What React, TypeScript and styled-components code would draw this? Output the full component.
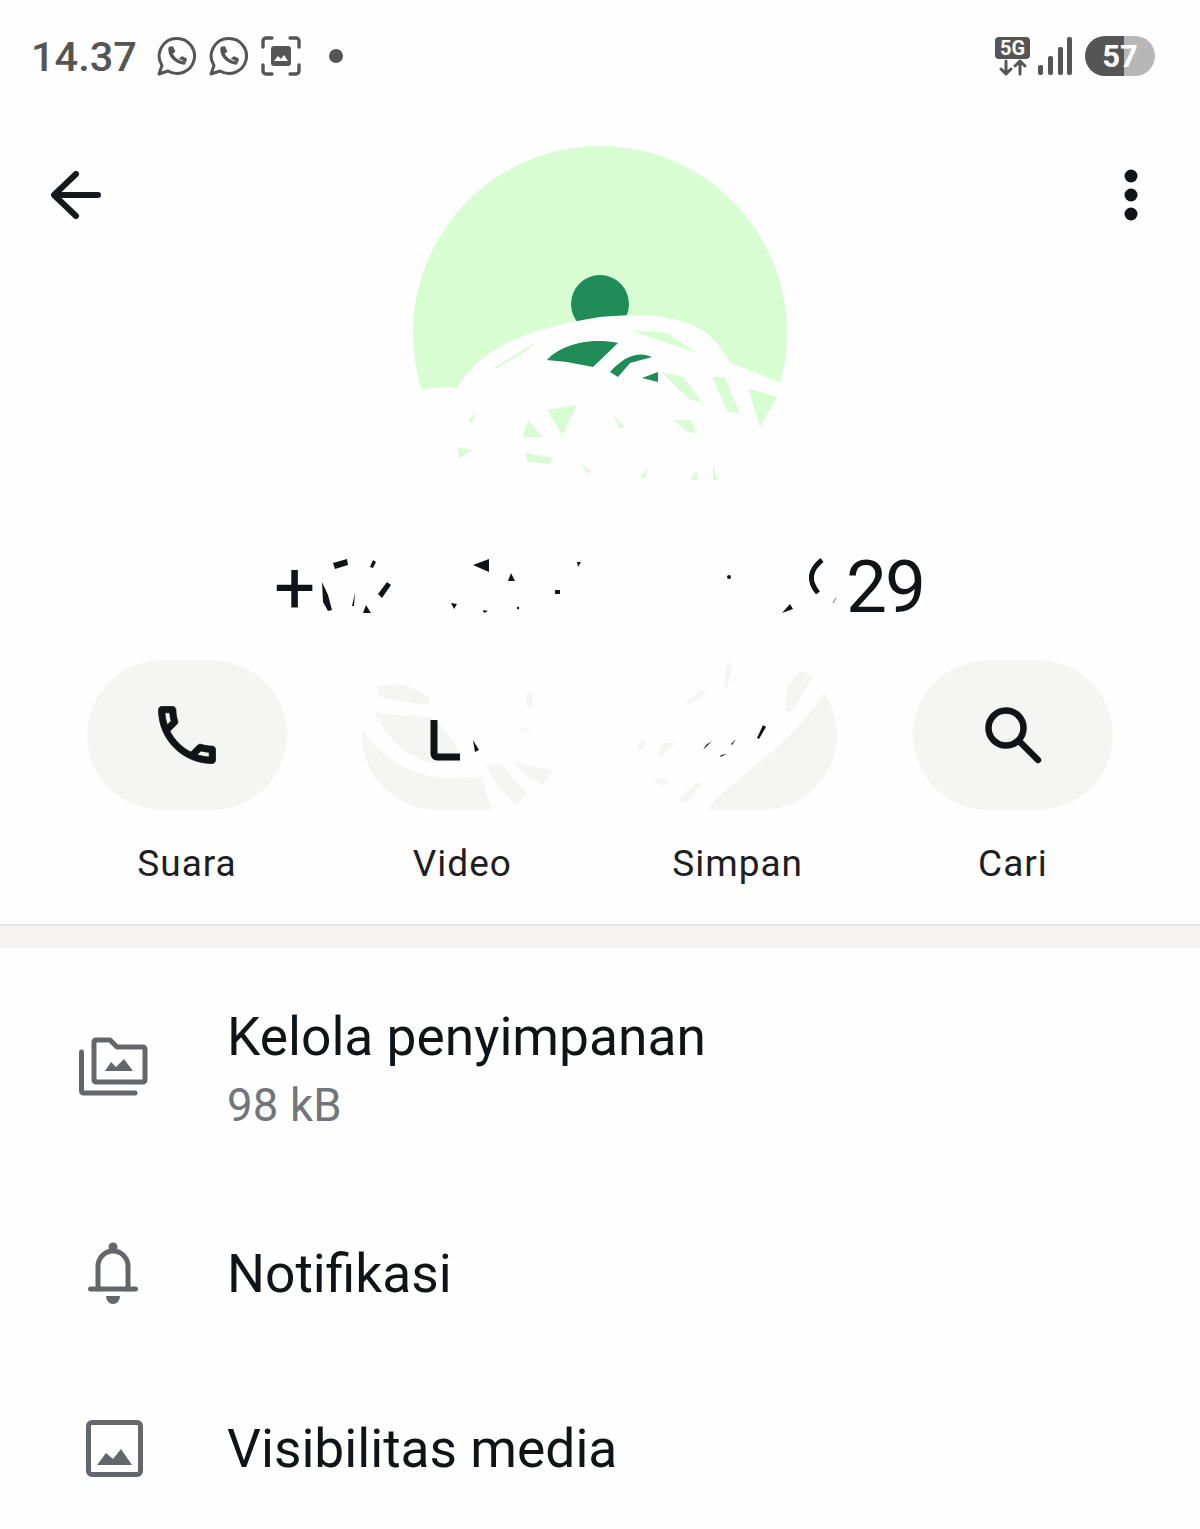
import React from "react";
import styled, { createGlobalStyle } from "styled-components";

const Global = createGlobalStyle`
  html, body { margin: 0; padding: 0; background: #fefefe; }
  body { font-family: Roboto, "Liberation Sans", sans-serif; overflow: hidden; }
`;

const Page = styled.div`
  width: 1200px;
  height: 1529px;
  overflow: hidden;
  background: #fefefe;
  color: #101417;
`;

const StatusBar = styled.div`
  height: 112px;
  padding: 0 45px 0 31px;
  box-sizing: border-box;
  display: flex;
  align-items: center;
  justify-content: space-between;
  color: #555;
`;

const StatusGroup = styled.div`
  display: flex;
  align-items: center;
`;

const Time = styled.span`
  font-size: 41.5px;
  font-weight: 500;
  margin-right: 20px;
`;

const StatusIcon = styled.svg<{ $gap?: number }>`
  display: block;
  margin-right: ${(p) => p.$gap ?? 0}px;
  flex: none;
`;

const Notice = styled.span`
  width: 14px;
  height: 14px;
  border-radius: 50%;
  background: #555;
  margin-left: 28px;
`;

const NetBlock = styled.div`
  display: flex;
  flex-direction: column;
  align-items: center;
  width: 35px;
  margin-right: 8px;
`;

const FiveG = styled.span`
  width: 35px;
  height: 22px;
  border-radius: 4px;
  background: #555;
  color: #fefefe;
  font-size: 20px;
  line-height: 22px;
  font-weight: 700;
  text-align: center;
`;

const Battery = styled.div`
  position: relative;
  width: 70px;
  height: 40px;
  margin-left: 13px;
  border-radius: 20px;
  overflow: hidden;
  background: linear-gradient(90deg, #555 0, #555 39px, #b7b7b7 39px);
  color: #fefefe;
  font-size: 31px;
  line-height: 41px;
  font-weight: 700;
  text-align: center;
`;

const Header = styled.div`
  display: grid;
  grid-template-columns: 1fr 374px 1fr;
  align-items: start;
  height: 408px;
  padding-top: 34px;
  box-sizing: border-box;
`;

const BackIcon = styled.svg`
  display: block;
  margin: 25px 0 0 51px;
`;

const MoreIcon = styled.svg`
  display: block;
  margin: 23px 62px 0 auto;
`;

const Avatar = styled.svg`
  display: block;
  filter: blur(0.5px);
`;

const NameRow = styled.div`
  height: 140px;
  padding: 0 276px 0 274px;
  box-sizing: border-box;
  display: flex;
  align-items: flex-start;
  justify-content: space-between;
  font-size: 73px;
  line-height: 70px;
  letter-spacing: -2px;
  font-weight: 400;
`;

const NameEdge = styled.span`
  display: block;
  margin-top: 32px;
`;

const NameScratch = styled.svg`
  display: block;
  flex: none;
  margin-top: 35px;
`;

const Actions = styled.div`
  display: flex;
  justify-content: space-between;
  padding: 0 87px;
  height: 264px;
`;

const Action = styled.div`
  width: 200px;
  display: flex;
  flex-direction: column;
  align-items: center;
`;

const Pill = styled.div<{ $scratched?: boolean }>`
  width: 200px;
  height: 150px;
  border-radius: 75px;
  background: ${(p) => (p.$scratched ? "transparent" : "#f5f5f3")};
  display: flex;
  align-items: center;
  justify-content: center;
`;

const PillArt = styled.svg`
  display: block;
  overflow: visible;
  filter: blur(0.5px);
`;

const ActionLabel = styled.span`
  margin-top: 32px;
  font-size: 37px;
  line-height: 44px;
  letter-spacing: 1px;
  color: #1d2023;
`;

const Band = styled.div`
  height: 24px;
  background: #f5f4f2;
  border-top: 2px solid #e4e4e3;
  box-sizing: border-box;
`;

const Row = styled.div<{ $height: number }>`
  height: ${(p) => p.$height}px;
  display: grid;
  grid-template-columns: 227px 1fr;
  align-items: center;
`;

const RowIcon = styled.div<{ $nudge?: number }>`
  display: flex;
  justify-content: center;
  padding-left: ${(p) => p.$nudge ?? 0}px;
  box-sizing: border-box;
  width: 226px;
`;

const RowText = styled.div<{ $drop?: number }>`
  display: flex;
  flex-direction: column;
  padding-top: ${(p) => p.$drop ?? 0}px;
`;

const RowTitle = styled.span`
  font-size: 53.3px;
  line-height: 62px;
  color: #101417;
`;

const RowSub = styled.span`
  font-size: 45.5px;
  line-height: 54px;
  margin-top: 11px;
  letter-spacing: 0.2px;
  color: #70767b;
`;

const WhatsApp = () => (
  <StatusIcon width="40" height="40" viewBox="0 0 40 40" $gap={12} fill="none" stroke="#555" strokeWidth="3">
    <path d="M20 2.5A17.5 17.5 0 1 1 11 35L2 38l3-8.5A17.5 17.5 0 0 1 20 2.5Z" strokeLinejoin="round" />
    <path d="M13 12.5c-.5 7 6 14 14 14.500" strokeWidth="3.400" strokeLinecap="round" />
    <path d="M12.500 11.500l3-.5 2 4.500-2.500 2M22.500 23l2.500-2 4 2-.5 3" fill="#555" strokeWidth="1.600" strokeLinejoin="round" />
  </StatusIcon>
);

const ScreenshotIcon = () => (
  <StatusIcon width="40" height="40" viewBox="0 0 40 40" fill="none">
    <path d="M2 11V5a3 3 0 0 1 3-3h6M29 2h6a3 3 0 0 1 3 3v6M38 29v6a3 3 0 0 1-3 3h-6M11 38H5a3 3 0 0 1-3-3v-6" stroke="#555" strokeWidth="3.400" strokeLinecap="round" />
    <rect x="10" y="10" width="20" height="20" rx="3" fill="#555" />
    <path d="M13 25l4-5 3 3 3-4 4 6z" fill="#fefefe" />
  </StatusIcon>
);

const ScratchBits = ({ d, fill }: { d: string[]; fill: string }) => (
  <>
    {d.map((points) => (
      <polygon key={points} points={points} fill={fill} />
    ))}
  </>
);

const lightBits = [
  "493,368 540,340 523,353 497,368",
  "630,330 667,333 697,353 667,343",
  "661,372 683,377 702,402 690,400",
  "712,377 725,377 740,413 728,412",
  "748,388 777,397 760,427",
  "547,410 577,405 562,435",
  "528,420 543,437 522,437",
  "457,447 473,450 459,458",
  "525,453 553,458 550,464 528,462",
  "673,420 690,420 697,433 687,432",
  "613,415 625,427 620,429",
  "468,420 477,413 472,423",
  "580,463 592,472 587,473",
  "640,477 648,468 645,478",
  "690,480 697,470 697,480",
  "713,463 718,480 713,480",
];

const AvatarArt = () => (
  <Avatar width="374" height="374" viewBox="413 146 374 374">
    <circle cx="600" cy="333" r="187" fill="#d9fdd3" />
    <circle cx="600" cy="304" r="29" fill="#1f8b57" />
    <path d="M405 395C425 388 440 386 457 388C480 350 520 330 600 317C680 310 710 325 730 363L790 386V525H405Z" fill="#fefefe" />
    <ScratchBits d={lightBits} fill="#d9fdd3" />
    <path d="M547 360C560 345 590 337 618 343L593 367L567 362Z" fill="#1f8b57" />
    <path d="M610 372C622 358 638 350 652 357L630 363L618 377Z" fill="#1f8b57" />
    <polygon points="642,378 658,372 658,382" fill="#1f8b57" />
  </Avatar>
);

const numberBits = [
  "322,582 328,595 332,610 328,611 323,602",
  "333,563 347,559 348,565 335,569",
  "373,560 376,562 373,568 370,567",
  "387,582 391,585 382,598 378,594",
  "355,593 352,606 354,606",
  "366,605 371,613 363,613",
  "473,565 489,559 489,572",
  "511,573 515,581 508,581",
  "451,603 457,604 454,609",
  "483,610 488,611 484,613",
  "577,562 581,562 578,567",
  "555,590 560,590 560,594 555,594",
  "782,613 790,604 793,609",
];

const NumberScratch = () => (
  <NameScratch width="520" height="65" viewBox="320 555 520 65">
    <ScratchBits d={numberBits} fill="#101417" />
    <circle cx="729" cy="577" r="2" fill="#101417" />
    <circle cx="518" cy="608" r="1.200" fill="#101417" />
    <path d="M822 560q-19 15-4 33" fill="none" stroke="#101417" strokeWidth="5" />
    <path d="M833 603l3-5" stroke="#888" strokeWidth="1.200" />
  </NameScratch>
);

const greyVideo = [
  "M15 27C30 20 55 25 68 40L65 45C45 42 28 40 18 37Z",
  "M13 53L68 57C85 70 92 80 101 100L71 103C48 98 28 85 13 53Z",
  "M1 70C15 95 50 118 88 118L120 117L125 137L131 150H75A75 75 0 0 1 0 75Z",
  "M123 105L138 103L165 133L155 146L138 130Z",
  "M151 102L191 110L181 125L165 117Z",
  "M165 33L171 33L171 47L164 47Z",
  "M156 67L171 70L161 73Z",
];

const greySave = [
  "M186 33A75 75 0 0 1 125 150H69C90 120 145 95 186 33Z",
  "M162 10L175 17L155 50L147 53L149 27Z",
  "M89 3L95 3L90 27L85 30Z",
  "M62 30L69 32L52 45L48 42Z",
  "M25 83L37 83L24 97L19 96Z",
  "M-1 83L7 80L5 90L0 90Z",
  "M14 118L32 120L24 127Z",
  "M59 122L65 123L49 143L39 140Z",
];

const inkSave = [
  "125,65 128,67 121,79 119,78",
  "74,81 65,90 68,85",
  "98,79 94,85 93,84",
  "89,94 82,97 83,95",
];

const GreyShapes = ({ d }: { d: string[] }) => (
  <>
    {d.map((path) => (
      <path key={path} d={path} fill="#f5f5f3" />
    ))}
  </>
);

const Row1Icon = () => (
  <svg width="70" height="60" viewBox="0 0 70 60" fill="none" stroke="#63676b" strokeWidth="5" strokeLinecap="round" strokeLinejoin="round">
    <path d="M3.500 15V54a2 2 0 0 0 2 2H57" />
    <path d="M16 5a2 2 0 0 1 2-2h14l7 7h26a2 2 0 0 1 2 2v31a2 2 0 0 1-2 2H18a2 2 0 0 1-2-2Z" />
    <path d="M27 34l6-9 5 5 8-8 9 12Z" fill="#63676b" stroke="none" />
  </svg>
);

const Row2Icon = () => (
  <svg width="50" height="63" viewBox="0 0 50 63" fill="none" stroke="#63676b" strokeWidth="5" strokeLinecap="round">
    <path d="M10 47V24A15 15 0 0 1 40 24V47" />
    <path d="M2.500 47H47.500" />
    <circle cx="25" cy="5" r="4.500" fill="#63676b" stroke="none" />
    <path d="M18 54H32A7 8 0 0 1 18 54Z" fill="#63676b" stroke="none" />
  </svg>
);

const Row3Icon = () => (
  <svg width="57" height="57" viewBox="0 0 57 57" fill="none" stroke="#63676b" strokeWidth="5">
    <rect x="2.500" y="2.500" width="52" height="52" rx="3.500" />
    <path d="M11 45l9-12 7 6 8-10 11 16Z" fill="#63676b" stroke="none" />
  </svg>
);

export default function App() {
  return (
    <Page>
      <Global />
      <StatusBar>
        <StatusGroup>
          <Time>14.37</Time>
          <WhatsApp />
          <WhatsApp />
          <ScreenshotIcon />
          <Notice />
        </StatusGroup>
        <StatusGroup>
          <NetBlock>
            <FiveG>5G</FiveG>
            <StatusIcon width="28" height="17" viewBox="0 0 28 17" fill="none" stroke="#555" strokeWidth="3" strokeLinecap="round" strokeLinejoin="round">
              <path d="M7 2V15M2 10l5 5 5-5M21 15V2M16 7l5-5 5 5" />
            </StatusIcon>
          </NetBlock>
          <StatusIcon width="34" height="38" viewBox="0 0 34 38" fill="#555">
            <rect x="0" y="28" width="5" height="10" rx="2" />
            <rect x="10" y="19" width="5" height="19" rx="2" />
            <rect x="20" y="10" width="5" height="28" rx="2" />
            <rect x="29" y="0" width="5" height="38" rx="2" />
          </StatusIcon>
          <Battery>57</Battery>
        </StatusGroup>
      </StatusBar>

      <Header>
        <BackIcon width="50" height="48" viewBox="0 0 50 48" fill="none" stroke="#15191c" strokeWidth="6" strokeLinecap="round" strokeLinejoin="round">
          <path d="M47 24H4M25 3L3 24l22 21" />
        </BackIcon>
        <AvatarArt />
        <MoreIcon width="14" height="52" viewBox="0 0 14 52" fill="#101417">
          <circle cx="7" cy="7" r="6.500" />
          <circle cx="7" cy="26" r="6.500" />
          <circle cx="7" cy="45" r="6.500" />
        </MoreIcon>
      </Header>

      <NameRow>
        <NameEdge>+</NameEdge>
        <NumberScratch />
        <NameEdge>29</NameEdge>
      </NameRow>

      <Actions>
        <Action>
          <Pill>
            <svg width="76" height="76" viewBox="0 0 24 24" fill="#101417" stroke="#101417" strokeWidth="0.250">
              <path d="M6.540 5c.06.89.21 1.760.45 2.590l-1.200 1.200c-.41-1.200-.67-2.470-.76-3.790h1.510m9.860 12.020c.85.24 1.720.39 2.600.45v1.490c-1.320-.09-2.590-.35-3.800-.75l1.200-1.190M7.500 3H4c-.55 0-1 .45-1 1 0 9.390 7.610 17 17 17 .55 0 1-.45 1-1v-3.490c0-.55-.45-1-1-1-1.240 0-2.450-.2-3.570-.57-.1-.04-.21-.05-.31-.05-.26 0-.51.1-.71.29l-2.200 2.200c-2.830-1.450-5.150-3.760-6.590-6.590l2.200-2.200c.28-.28.36-.67.25-1.020C8.700 6.450 8.500 5.250 8.500 4c0-.55-.45-1-1-1z" />
            </svg>
          </Pill>
          <ActionLabel>Suara</ActionLabel>
        </Action>
        <Action>
          <Pill $scratched>
            <PillArt width="200" height="150" viewBox="0 0 200 150">
              <GreyShapes d={greyVideo} />
              <path d="M72 60V94a3 3 0 0 0 3 3H98" fill="none" stroke="#101417" strokeWidth="7" />
              <polygon points="111,80 117,90 113,92" fill="#101417" />
            </PillArt>
          </Pill>
          <ActionLabel>Video</ActionLabel>
        </Action>
        <Action>
          <Pill $scratched>
            <PillArt width="200" height="150" viewBox="0 0 200 150">
              <GreyShapes d={greySave} />
              <ScratchBits d={inkSave} fill="#101417" />
            </PillArt>
          </Pill>
          <ActionLabel>Simpan</ActionLabel>
        </Action>
        <Action>
          <Pill>
            <svg width="58" height="58" viewBox="0 0 58 58" fill="none" stroke="#101417" strokeWidth="6.500" strokeLinecap="round">
              <circle cx="22" cy="22" r="17.500" />
              <path d="M36 36L54 54" />
            </svg>
          </Pill>
          <ActionLabel>Cari</ActionLabel>
        </Action>
      </Actions>

      <Band />

      <Row $height={238}>
        <RowIcon><Row1Icon /></RowIcon>
        <RowText $drop={5}>
          <RowTitle>Kelola penyimpanan</RowTitle>
          <RowSub>98 kB</RowSub>
        </RowText>
      </Row>
      <Row $height={175}>
        <RowIcon><Row2Icon /></RowIcon>
        <RowText>
          <RowTitle>Notifikasi</RowTitle>
        </RowText>
      </Row>
      <Row $height={175}>
        <RowIcon $nudge={2}><Row3Icon /></RowIcon>
        <RowText>
          <RowTitle>Visibilitas media</RowTitle>
        </RowText>
      </Row>
    </Page>
  );
}
